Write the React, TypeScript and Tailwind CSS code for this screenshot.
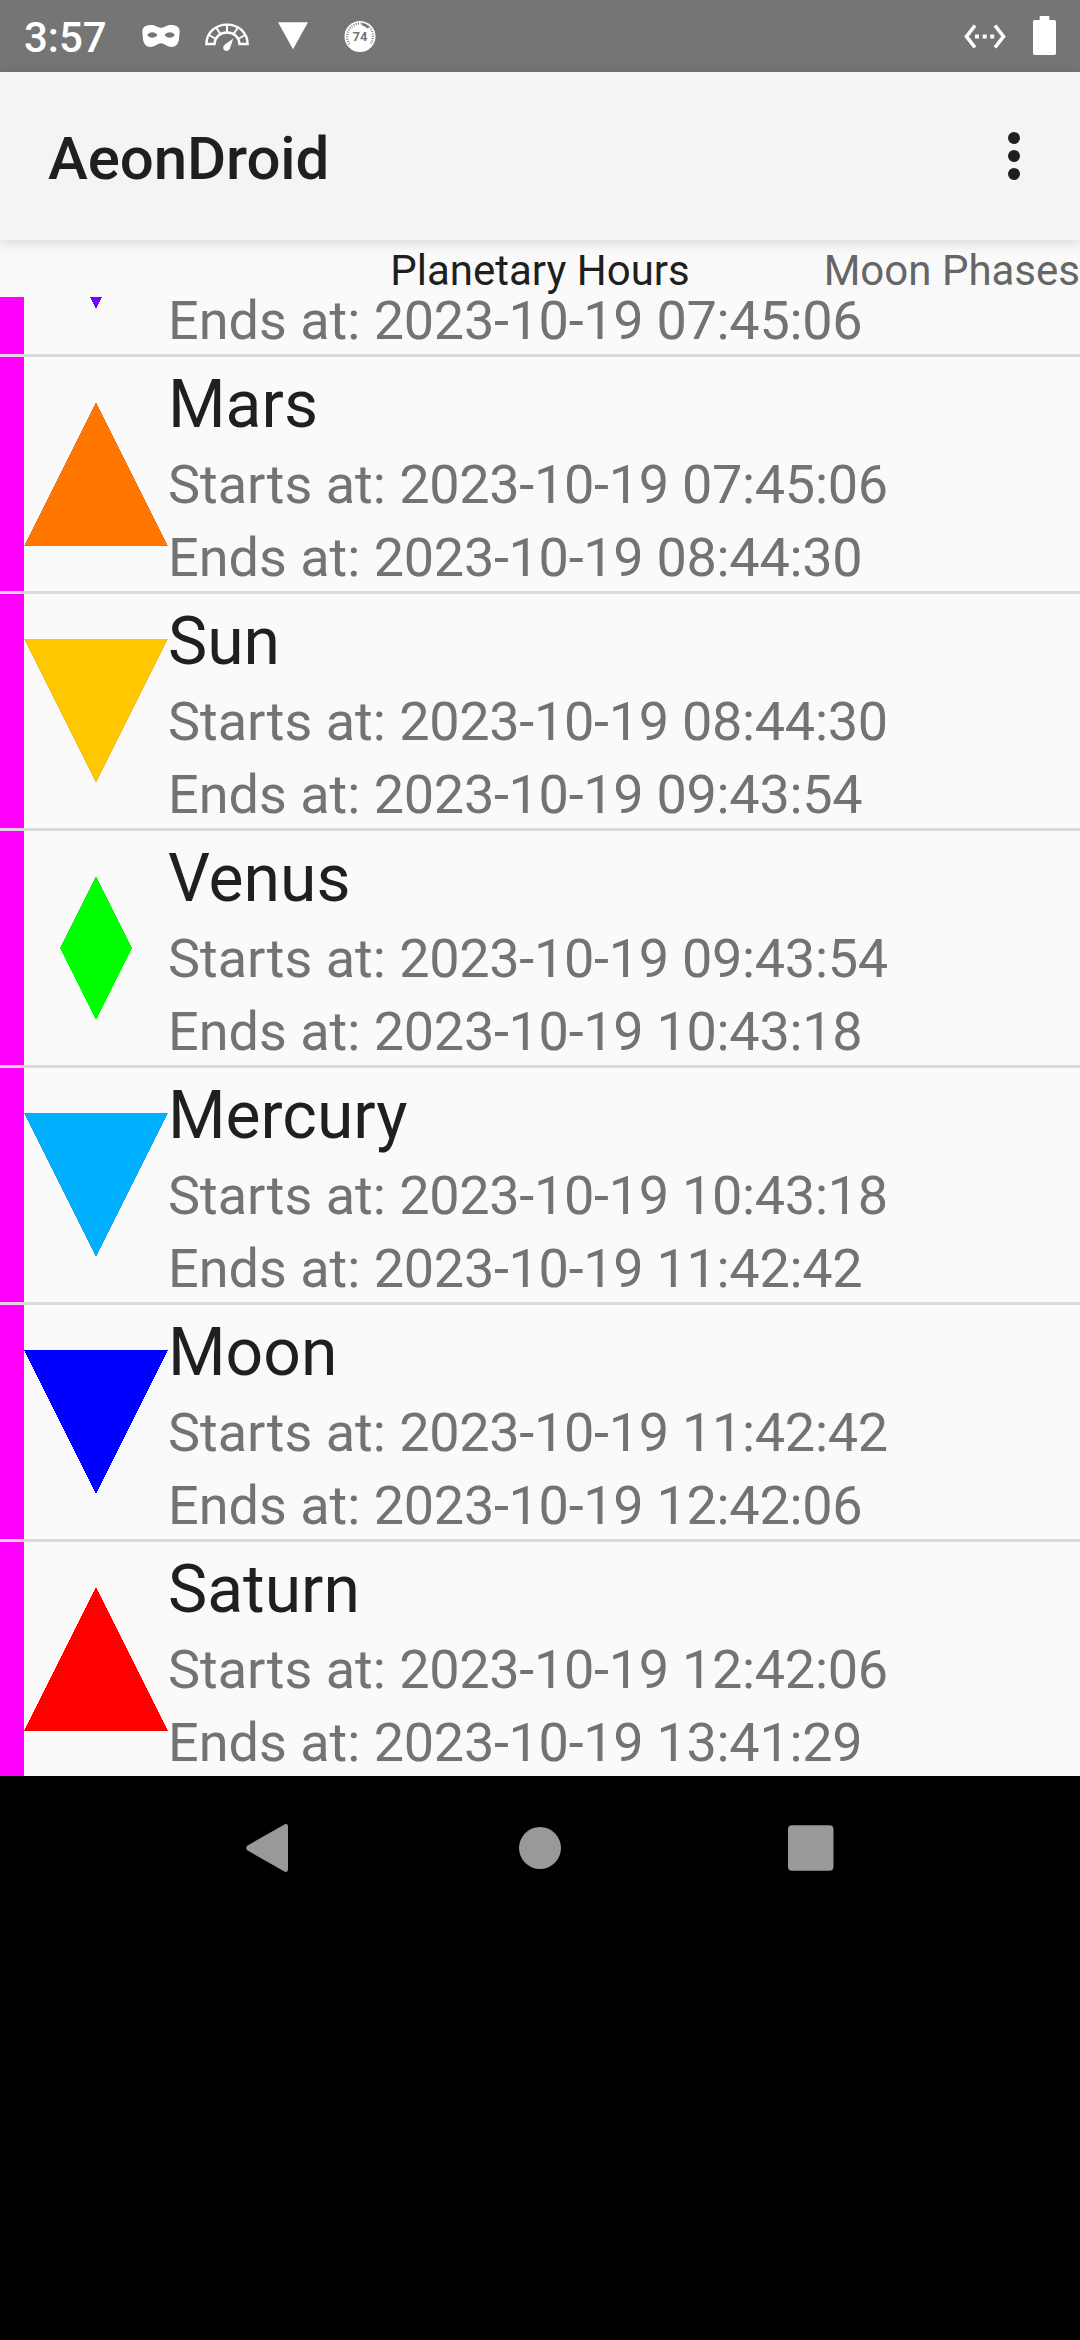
import React from "react";

type Shape = "up" | "down" | "diamond";

type Hour = {
  name?: string;
  starts?: string;
  ends: string;
  shape: Shape;
  fill: string;
};

const hours: Hour[] = [
  { ends: "2023-10-19 07:45:06", shape: "down", fill: "#7800ff" },
  { name: "Mars", starts: "2023-10-19 07:45:06", ends: "2023-10-19 08:44:30", shape: "up", fill: "#ff7600" },
  { name: "Sun", starts: "2023-10-19 08:44:30", ends: "2023-10-19 09:43:54", shape: "down", fill: "#ffc800" },
  { name: "Venus", starts: "2023-10-19 09:43:54", ends: "2023-10-19 10:43:18", shape: "diamond", fill: "#00ff00" },
  { name: "Mercury", starts: "2023-10-19 10:43:18", ends: "2023-10-19 11:42:42", shape: "down", fill: "#00b0ff" },
  { name: "Moon", starts: "2023-10-19 11:42:42", ends: "2023-10-19 12:42:06", shape: "down", fill: "#0000ff" },
  { name: "Saturn", starts: "2023-10-19 12:42:06", ends: "2023-10-19 13:41:29", shape: "up", fill: "#ff0000" },
];

const points: Record<Shape, string> = {
  up: "72,0 144,144 0,144",
  down: "0,0 144,0 72,144",
  diamond: "72,0 108,72 72,144 36,72",
};

function StatusBar() {
  return (
    <header className="flex h-[72px] shrink-0 items-center justify-between bg-[#757575] pl-6 pr-6 text-white">
      <div className="flex items-center">
        <span className="w-[118px] pt-[3px] text-[42px] font-medium leading-[72px]">3:57</span>
        <svg className="h-[72px] w-[38px]" viewBox="0 0 38 72" fill="#fff">
          <path
            fillRule="evenodd"
            d="M0.300 31.500C0.300 27 4 25 9 25C14 25 16 27.800 19 27.800S24 25 29 25C34 25 37.700 27 37.700 31.500L37 39C36.500 44 33.500 47 29.500 47C24.500 47 22.500 43.300 19 43.300S13.500 47 8.500 47C4.500 47 1.500 44 1 39ZM5.300 35C7 38.700 13.500 38.700 15.200 35C13.500 31.300 7 31.300 5.300 35ZM22.800 35C24.500 38.700 31 38.700 32.700 35C31 31.300 24.500 31.300 22.800 35Z"
          />
        </svg>
        <svg className="ml-[25px] h-[72px] w-[44px]" viewBox="0 0 44 72" fill="none">
          <path d="M1.400 44C1.700 32.500 10.500 24.600 22 24.600S42.300 32.500 42.600 44H34.500C34 37 29 32.500 22 32.500S10 37 9.500 44Z" stroke="#fff" strokeWidth="2.400" />
          <path d="M22 24V32M11.500 28L15 33.500M32.500 28L29 33.500M4 35L10 38.500M40 35L34 38.500" stroke="#fff" strokeWidth="2" />
          <path d="M28.300 38.500L24.900 48.500C23.700 52 18.800 51.500 18.200 48C18.100 46.300 18.800 45.500 20 44.500Z" fill="#fff" />
        </svg>
        <svg className="ml-[28px] h-[72px] w-[32px]" viewBox="0 0 32 72" fill="#fff">
          <path d="M1 22.300H31L16 49.300Z" />
        </svg>
        <div className="relative ml-[35px] h-[72px] w-[32px]">
          <svg className="h-[72px] w-[32px]" viewBox="0 0 32 72" fill="none">
            <circle cx="16" cy="36.500" r="15.500" fill="#fff" />
            <path d="M5.500 44A13 13 0 1 1 27 43.500" stroke="#757575" strokeWidth="2.200" strokeDasharray="0.900 1.500" />
            <path d="M18 24A13 13 0 0 1 24.500 27.500" stroke="#757575" strokeWidth="2.600" />
          </svg>
          <span className="absolute inset-x-0 top-[29px] text-center text-[13px] font-bold leading-[15px] text-[#757575]">74</span>
        </div>
      </div>
      <div className="flex items-center">
        <svg className="h-[72px] w-[42px]" viewBox="0 0 42 72" fill="none">
          <path d="M11 25.500L2.500 36.500L11 47.500M31 25.500L39.500 36.500L31 47.500" stroke="#fff" strokeWidth="3.600" />
          <path d="M11 34.500h4v4h-4zM18.700 34.500h4v4h-4zM26.200 34.500h4v4h-4z" fill="#fff" />
        </svg>
        <svg className="ml-[27px] h-[72px] w-[23px]" viewBox="0 0 23 72" fill="#fff">
          <path d="M6.700 16H16.300V20H21.400Q23 20 23 21.600V53.200Q23 55 21.400 55H1.600Q0 55 0 53.200V21.600Q0 20 1.600 20H6.700Z" />
        </svg>
      </div>
    </header>
  );
}

function AppBar() {
  return (
    <div className="relative z-10 flex h-[168px] shrink-0 items-center justify-between bg-[#f4f4f4] pl-12 pr-[60px] shadow-[0_3px_12px_rgba(0,0,0,0.15)]">
      <h1 className="pt-[5px] text-[60px] font-medium leading-[72px] tracking-[-0.1px] text-[#1f1f1f]">AeonDroid</h1>
      <div className="flex flex-col gap-1.5">
        <span className="size-3 rounded-full bg-[#1f1f1f]" />
        <span className="size-3 rounded-full bg-[#1f1f1f]" />
        <span className="size-3 rounded-full bg-[#1f1f1f]" />
      </div>
    </div>
  );
}

function TabStrip() {
  return (
    <nav className="grid h-[57px] shrink-0 grid-cols-3 whitespace-nowrap pt-[3px] text-[42px] leading-[55px]">
      <span />
      <span className="text-center text-[#1f1f1f]">Planetary Hours</span>
      <span className="text-right text-[#666666]">Moon Phases</span>
    </nav>
  );
}

function HourRow({ hour }: { hour: Hour }) {
  return (
    <li className="flex h-[234px] shrink-0 items-center">
      <div className="h-full w-6 bg-[#ff00ff]" />
      <svg className="size-36" viewBox="0 0 144 144" shapeRendering="crispEdges">
        <polygon points={points[hour.shape]} fill={hour.fill} />
      </svg>
      <div className="-mb-1.5 flex h-full flex-col justify-end whitespace-nowrap text-[54px] leading-[73px] text-[#737373]">
        {hour.name && <h2 className="-mb-0.5 text-[66px] leading-[90px] text-[#1f1f1f]">{hour.name}</h2>}
        {hour.starts && (
          <p>
            Starts at: <time className="tracking-[-0.3px]">{hour.starts}</time>
          </p>
        )}
        <p>
          Ends at: <time className="tracking-[-0.3px]">{hour.ends}</time>
        </p>
      </div>
    </li>
  );
}

function NavigationBar() {
  return (
    <footer className="flex h-36 shrink-0 items-center justify-center bg-black">
      <svg className="h-12 w-[42px]" viewBox="0 0 42 48" fill="#999">
        <path d="M38 0.700Q42 -1.500 42 3V45Q42 49.500 38 47.300L1.500 26.500Q-1 24 1.500 21.500Z" />
      </svg>
      <svg className="ml-[231px] h-12 w-[42px]" viewBox="0 0 42 48" fill="#999">
        <circle cx="21" cy="24" r="21" />
      </svg>
      <svg className="ml-[227px] h-12 w-[46px]" viewBox="0 0 46 48" fill="#999">
        <rect x="0" y="1.200" width="45.500" height="45.500" rx="4" />
      </svg>
    </footer>
  );
}

export default function App() {
  return (
    <div className="flex h-[2340px] w-[1080px] flex-col overflow-hidden bg-black font-['Roboto',sans-serif]">
      <StatusBar />
      <div className="flex h-[1704px] shrink-0 flex-col bg-[#fafafa]">
        <AppBar />
        <TabStrip />
        <ul className="flex h-[1479px] flex-col justify-end overflow-hidden">
          {hours.map((hour, i) => (
            <React.Fragment key={hour.ends}>
              {i > 0 && (
                <li className="flex h-[3px] shrink-0 bg-[#dadada]">
                  <span className="w-6 bg-linear-to-r from-[#f3c8f0] to-[#e0d4de]" />
                </li>
              )}
              <HourRow hour={hour} />
            </React.Fragment>
          ))}
        </ul>
      </div>
      <NavigationBar />
    </div>
  );
}
